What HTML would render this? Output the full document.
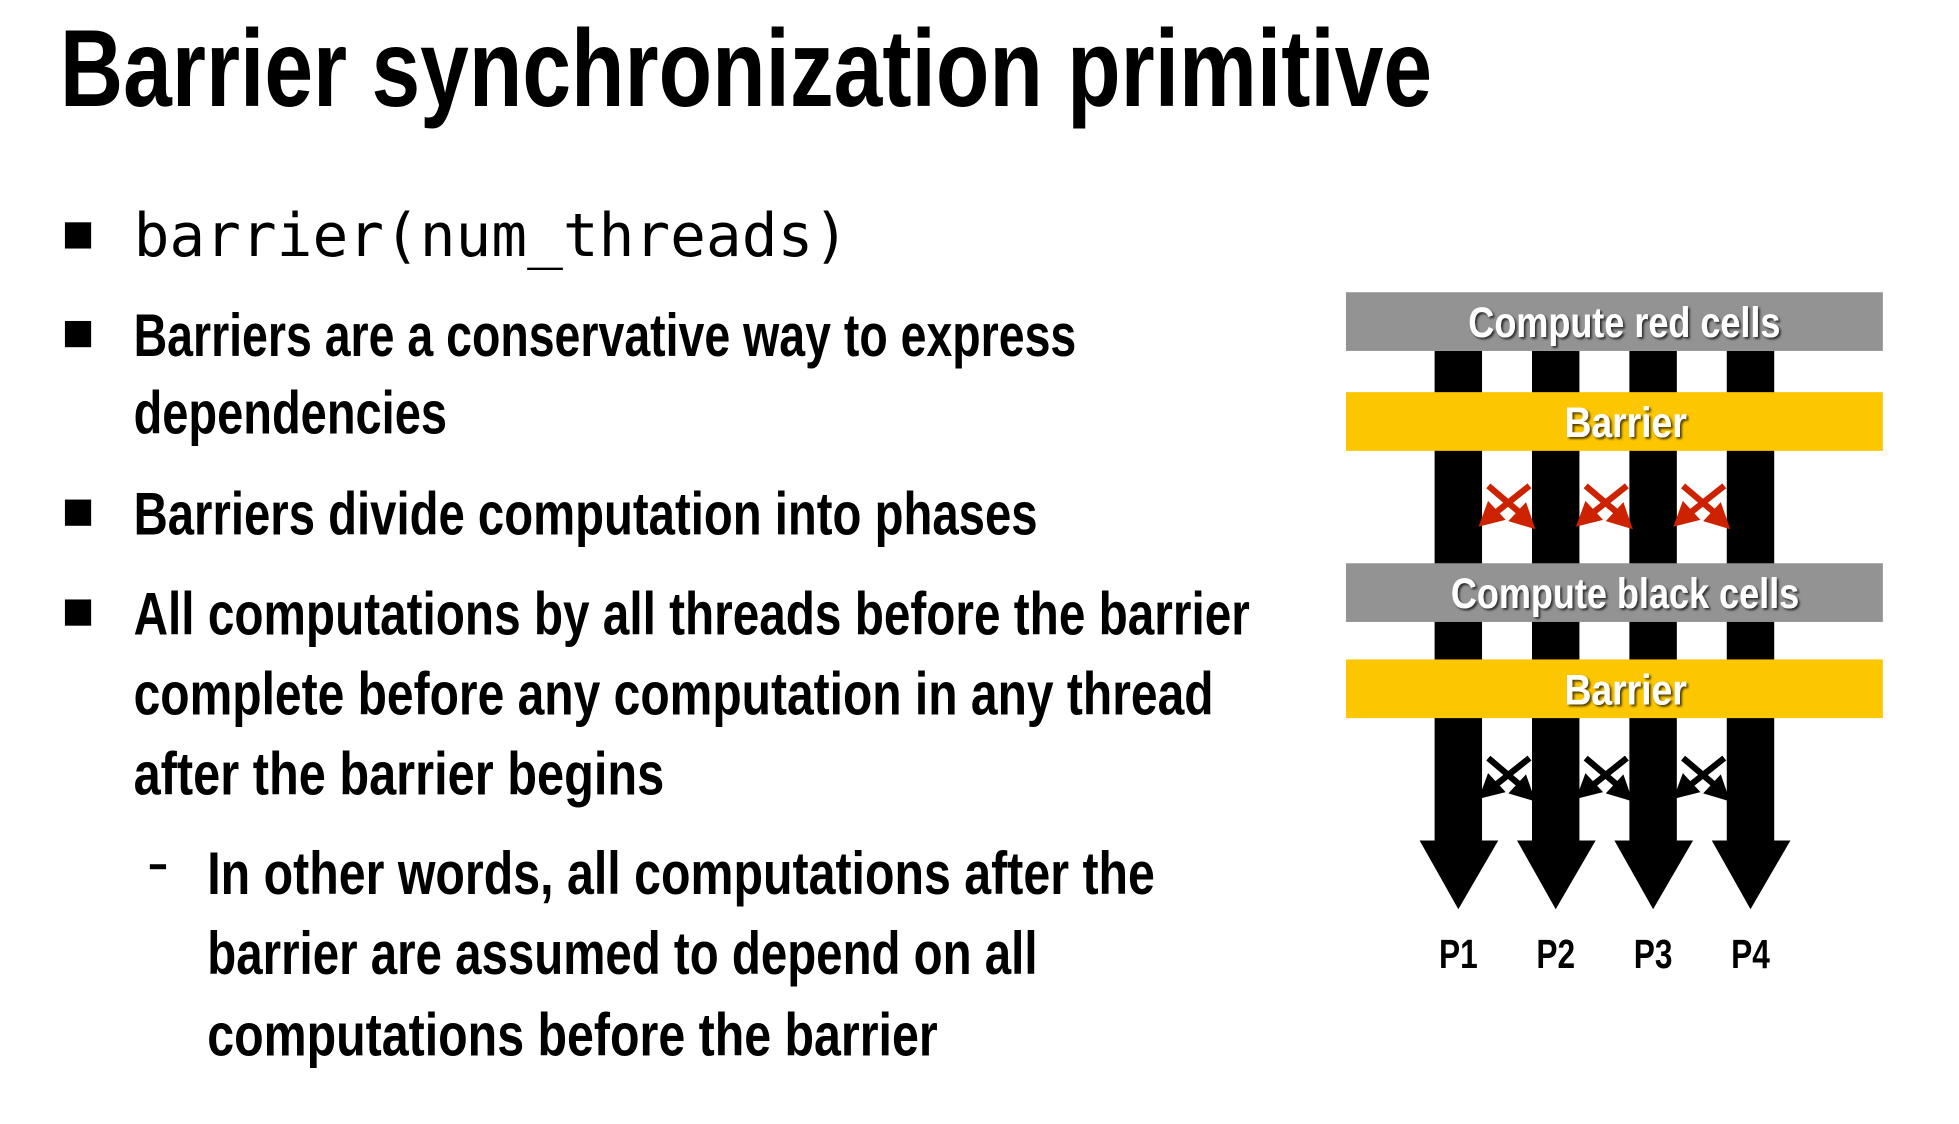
<!DOCTYPE html>
<html><head><meta charset="utf-8"><style>
html,body{margin:0;padding:0;background:#fff;width:1959px;height:1124px;overflow:hidden}
svg{display:block}
text{font-family:"Liberation Sans Narrow","Liberation Sans",sans-serif;font-weight:bold}
</style></head><body>
<svg width="1959" height="1124" viewBox="0 0 1569 900" preserveAspectRatio="none" xmlns="http://www.w3.org/2000/svg">
<defs>
<g id="xr">
<line x1="1192" y1="389" x2="1219" y2="412" stroke-width="5"/>
<line x1="1225" y1="389" x2="1196" y2="412" stroke-width="5"/>
<polygon points="1229,423 1209,417 1222,403"/>
<polygon points="1185,421 1205,416 1192,402"/>
</g>
<filter id="sh"><feDropShadow dx="1.5" dy="1.5" stdDeviation="0.8" flood-color="#000" flood-opacity="0.7"/></filter>
</defs>
<text x="48" y="85" font-size="88" textLength="1099" lengthAdjust="spacingAndGlyphs">Barrier synchronization primitive</text>

<rect x="52" y="178" width="21" height="21"/>
<text x="107" y="205" font-size="48" style="font-family:'DejaVu Sans Mono','Liberation Mono',monospace;font-weight:normal" textLength="573" lengthAdjust="spacingAndGlyphs">barrier(num_threads)</text>

<rect x="52" y="257" width="21" height="21"/>
<text x="107" y="285" font-size="48" textLength="755" lengthAdjust="spacingAndGlyphs">Barriers are a conservative way to express</text>
<text x="107" y="347" font-size="48" textLength="251" lengthAdjust="spacingAndGlyphs">dependencies</text>

<rect x="52" y="400" width="21" height="21"/>
<text x="107" y="428" font-size="48" textLength="724" lengthAdjust="spacingAndGlyphs">Barriers divide computation into phases</text>

<rect x="52" y="480" width="21" height="21"/>
<text x="107" y="508" font-size="48" textLength="894" lengthAdjust="spacingAndGlyphs">All computations by all threads before the barrier</text>
<text x="107" y="572" font-size="48" textLength="865" lengthAdjust="spacingAndGlyphs">complete before any computation in any thread</text>
<text x="107" y="636" font-size="48" textLength="425" lengthAdjust="spacingAndGlyphs">after the barrier begins</text>

<rect x="120" y="692" width="13" height="4"/>
<text x="166" y="716" font-size="48" textLength="759" lengthAdjust="spacingAndGlyphs">In other words, all computations after the</text>
<text x="166" y="780" font-size="48" textLength="665" lengthAdjust="spacingAndGlyphs">barrier are assumed to depend on all</text>
<text x="166" y="845" font-size="48" textLength="585" lengthAdjust="spacingAndGlyphs">computations before the barrier</text>

<g fill="#000">
<rect x="1149" y="281" width="38" height="393"/>
<rect x="1227" y="281" width="38" height="393"/>
<rect x="1305" y="281" width="38" height="393"/>
<rect x="1383" y="281" width="38" height="393"/>
<polygon points="1137,673 1200,673 1168,728"/>
<polygon points="1215,673 1278,673 1246,728"/>
<polygon points="1293,673 1356,673 1324,728"/>
<polygon points="1371,673 1434,673 1402,728"/>
</g>
<rect x="1078" y="234" width="430" height="47" fill="#939393"/>
<rect x="1078" y="314" width="430" height="47" fill="#fcc600"/>
<rect x="1078" y="451" width="430" height="47" fill="#939393"/>
<rect x="1078" y="528" width="430" height="47" fill="#fcc600"/>
<g fill="#fff" filter="url(#sh)" font-size="34">
<text x="1176" y="270" textLength="250" lengthAdjust="spacingAndGlyphs">Compute red cells</text>
<text x="1253" y="350" textLength="98" lengthAdjust="spacingAndGlyphs">Barrier</text>
<text x="1162" y="487" textLength="279" lengthAdjust="spacingAndGlyphs">Compute black cells</text>
<text x="1253" y="564" textLength="98" lengthAdjust="spacingAndGlyphs">Barrier</text>
</g>
<g fill="#cc2200" stroke="#cc2200">
<use href="#xr"/>
<use href="#xr" transform="translate(78,0)"/>
<use href="#xr" transform="translate(156,0)"/>
</g>
<g fill="#000" stroke="#000">
<use href="#xr" transform="translate(0,218)"/>
<use href="#xr" transform="translate(78,218)"/>
<use href="#xr" transform="translate(156,218)"/>
</g>
<g font-size="33" text-anchor="middle">
<text x="1168" y="775" textLength="31" lengthAdjust="spacingAndGlyphs">P1</text>
<text x="1246" y="775" textLength="31" lengthAdjust="spacingAndGlyphs">P2</text>
<text x="1324" y="775" textLength="31" lengthAdjust="spacingAndGlyphs">P3</text>
<text x="1402" y="775" textLength="31" lengthAdjust="spacingAndGlyphs">P4</text>
</g>
</svg>
</body></html>
